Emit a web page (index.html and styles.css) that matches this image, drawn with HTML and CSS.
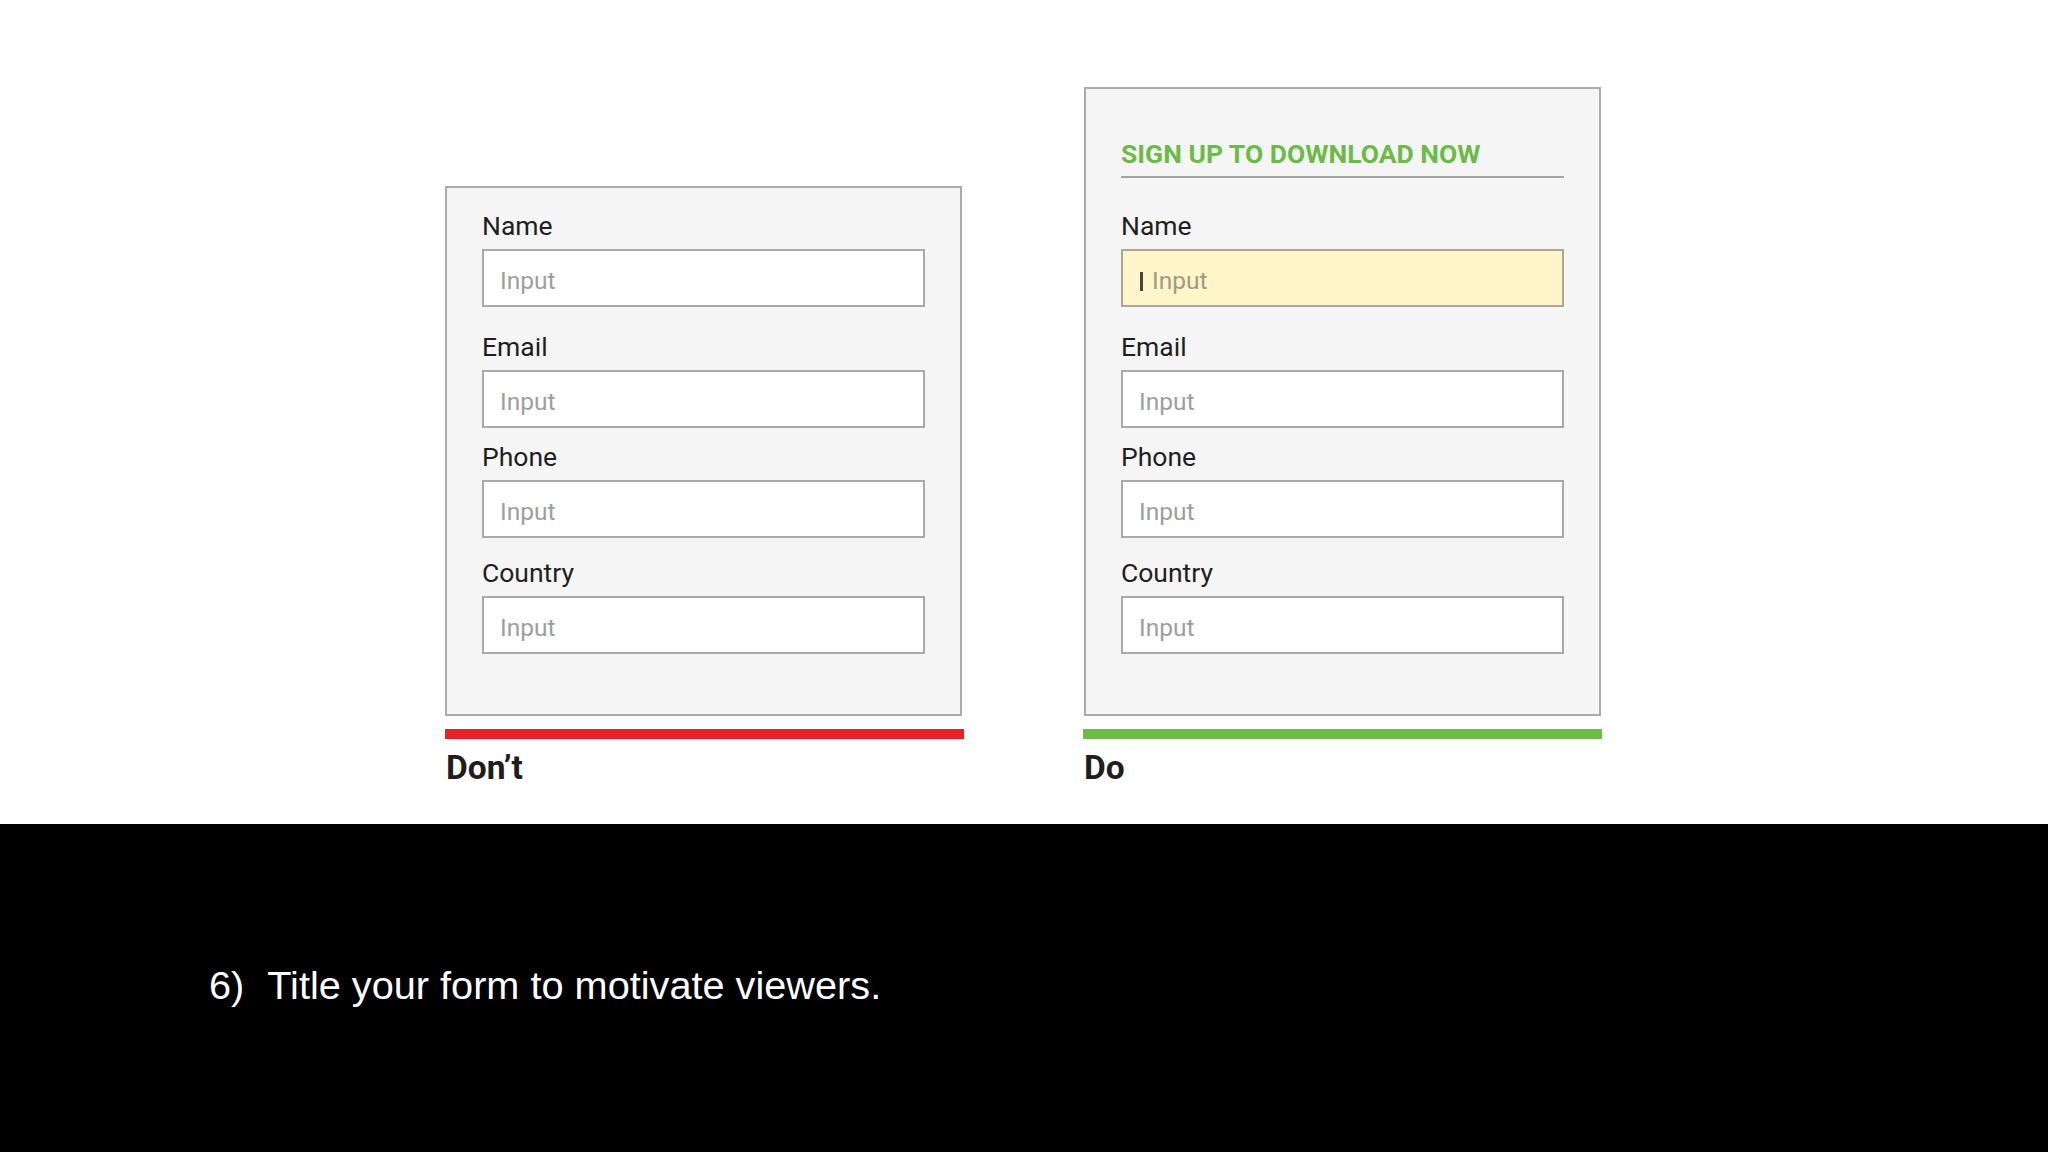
FILE: index.html
```html
<!DOCTYPE html>
<html lang="en">
<head>
<meta charset="utf-8">
<title>Title your form</title>
<link rel="stylesheet" href="styles.css">
</head>
<body>
<main class="stage">
  <div class="compare">
    <section class="column">
      <div class="panel">
        <div class="fields">
          <div class="field">
            <div class="label">Name</div>
            <div class="control"><span class="placeholder">Input</span></div>
          </div>
          <div class="field gap-email">
            <div class="label">Email</div>
            <div class="control"><span class="placeholder">Input</span></div>
          </div>
          <div class="field gap-phone">
            <div class="label">Phone</div>
            <div class="control"><span class="placeholder">Input</span></div>
          </div>
          <div class="field gap-country">
            <div class="label">Country</div>
            <div class="control"><span class="placeholder">Input</span></div>
          </div>
        </div>
      </div>
      <div class="bar bar-dont"></div>
      <div class="verdict">Don’t</div>
    </section>
    <section class="column column-do">
      <div class="panel panel-do">
        <h2 class="form-title">SIGN UP TO DOWNLOAD NOW</h2>
        <div class="fields">
          <div class="field">
            <div class="label">Name</div>
            <div class="control control-focus"><span class="cursor"></span><span class="placeholder">Input</span></div>
          </div>
          <div class="field gap-email">
            <div class="label">Email</div>
            <div class="control"><span class="placeholder">Input</span></div>
          </div>
          <div class="field gap-phone">
            <div class="label">Phone</div>
            <div class="control"><span class="placeholder">Input</span></div>
          </div>
          <div class="field gap-country">
            <div class="label">Country</div>
            <div class="control"><span class="placeholder">Input</span></div>
          </div>
        </div>
      </div>
      <div class="bar bar-do"></div>
      <div class="verdict">Do</div>
    </section>
  </div>
</main>
<footer class="caption-band">
  <p class="caption"><span class="num">6)</span><span>Title your form to motivate viewers.</span></p>
</footer>
</body>
</html>
```

FILE: styles.css
```css
html, body {
  margin: 0;
  padding: 0;
}

body {
  width: 2048px;
  height: 1152px;
  overflow: hidden;
  background: #ffffff;
  font-family: Roboto, "Noto Sans", "Liberation Sans", sans-serif;
  color: #1f1f1f;
}

.stage {
  height: 824px;
  box-sizing: border-box;
  padding: 87px 0 0 445px;
  background: #ffffff;
}

.compare {
  display: flex;
  align-items: flex-end;
  gap: 119px;
}

.column {
  width: 519px;
  display: flex;
  flex-direction: column;
}

.panel {
  width: 517px;
  box-sizing: border-box;
  border: 2px solid #ababab;
  background: #f5f5f5;
  padding: 23px 35px 60px 35px;
}

.panel-do {
  padding-top: 50px;
  margin-left: 1px;
}

.form-title {
  margin: 0;
  font-size: 26.5px;
  line-height: 30px;
  font-weight: 700;
  color: #6cbb46;
  padding-bottom: 7px;
  border-bottom: 2px solid #a3a3a3;
  margin-bottom: 33px;
}

.field {
  display: flex;
  flex-direction: column;
}

.gap-email { margin-top: 25px; }
.gap-phone { margin-top: 14px; }
.gap-country { margin-top: 20px; }

.label {
  font-size: 26.5px;
  line-height: 30px;
  color: #1f1f1f;
  margin-bottom: 8px;
}

.control {
  height: 58px;
  box-sizing: border-box;
  border: 2px solid #a9a9a9;
  background: #ffffff;
  padding: 15px 16px 0 16px;
  display: flex;
  align-items: flex-start;
}

.control-focus {
  background: #fef6c8;
  border-color: #aaa79a;
}

.placeholder {
  font-size: 24.5px;
  line-height: 29px;
  color: #9e9e9e;
}

.control-focus .placeholder {
  color: #a09a86;
}

.cursor {
  display: inline-block;
  width: 3px;
  height: 19px;
  margin-top: 6px;
  margin-left: 1px;
  margin-right: 9px;
  background: #4a4340;
}

.bar {
  width: 519px;
  height: 10px;
  margin-top: 13px;
}

.bar-dont { background: #ec1f26; }
.bar-do { background: #6cbd45; }

.verdict {
  margin-top: 10px;
  padding-left: 1px;
  font-size: 33.5px;
  line-height: 38px;
  font-weight: 700;
  color: #1e1e1e;
}

.caption-band {
  height: 328px;
  box-sizing: border-box;
  background: #000000;
  padding: 138px 0 0 209px;
}

.caption {
  margin: 0;
  display: flex;
  gap: 23px;
  font-family: "Liberation Sans", Arial, sans-serif;
  font-size: 39.7px;
  line-height: 46px;
  color: #ffffff;
}
```
